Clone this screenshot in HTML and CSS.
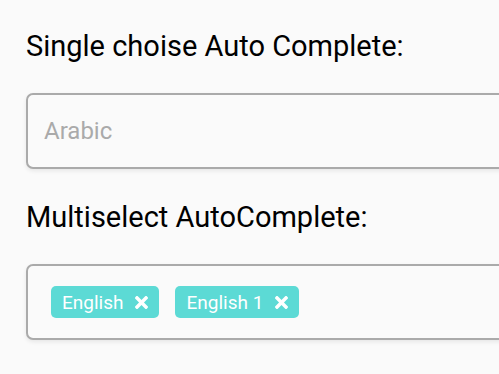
FILE: index.html
```html
<!DOCTYPE html>
<html lang="en">
<head>
  <meta charset="UTF-8">
  <meta name="viewport" content="width=device-width, initial-scale=1.0">
  <title>AutoComplete</title>
  <link rel="stylesheet" href="styles.css">
</head>
<body>
  <div class="page">
    <!-- single choice -->
    <div class="block">
      <h2 class="label">Single choise Auto Complete:</h2>
      <div class="field">
        <input type="text" class="field-input" placeholder="Arabic">
      </div>
    </div>

    <!-- multi select -->
    <div class="block">
      <h2 class="label">Multiselect AutoComplete:</h2>
      <div class="field field-multi">
        <span class="chip">English
          <svg class="chip-x" viewBox="0 80 352 352"><path d="M242.7 256l100.1-100.1c12.3-12.3 12.3-32.2 0-44.5l-22.2-22.2c-12.3-12.3-32.2-12.3-44.5 0L176 189.3 75.9 89.2c-12.3-12.3-32.2-12.3-44.5 0L9.2 111.4c-12.3 12.3-12.3 32.2 0 44.5L109.3 256 9.2 356.1c-12.3 12.3-12.3 32.2 0 44.5l22.2 22.2c12.3 12.3 32.2 12.3 44.5 0L176 322.7l100.1 100.1c12.3 12.3 32.2 12.3 44.5 0l22.2-22.2c12.3-12.3 12.3-32.2 0-44.5L242.7 256z"/></svg>
        </span>
        <span class="chip">English 1
          <svg class="chip-x" viewBox="0 80 352 352"><path d="M242.7 256l100.1-100.1c12.3-12.3 12.3-32.2 0-44.5l-22.2-22.2c-12.3-12.3-32.2-12.3-44.5 0L176 189.3 75.9 89.2c-12.3-12.3-32.2-12.3-44.5 0L9.2 111.4c-12.3 12.3-12.3 32.2 0 44.5L109.3 256 9.2 356.1c-12.3 12.3-12.3 32.2 0 44.5l22.2 22.2c12.3 12.3 32.2 12.3 44.5 0L176 322.7l100.1 100.1c12.3 12.3 32.2 12.3 44.5 0l22.2-22.2c12.3-12.3 12.3-32.2 0-44.5L242.7 256z"/></svg>
        </span>
      </div>
    </div>
  </div>
</body>
</html>
```

FILE: styles.css
```css
/* base */
body {
  margin: 0;
  background-color: #fafafa;
  font-family: Roboto, "Liberation Sans", sans-serif;
  color: #000;
  overflow: hidden;
}
.page {
  padding: 28px 0 0 26px;
}
.block {
  margin-bottom: 30px;
}
.label {
  font-size: 29px;
  font-weight: 400;
  line-height: 36px;
  margin: 0 0 29px;
}
.field {
  width: 540px;
  height: 76px;
  box-sizing: border-box;
  border: 2px solid #aaa;
  border-radius: 7px;
  background-color: #fafafa;
  box-shadow: 0 2px 4px rgba(0, 0, 0, 0.08);
  display: flex;
  align-items: center;
}
.field-input {
  border: none;
  outline: none;
  background: transparent;
  font-family: inherit;
  font-size: 24px;
  padding: 0 16px;
  width: 100%;
}
.field-input::placeholder {
  color: #aaa;
}

/* chips */
.field-multi {
  padding-left: 23px;
  gap: 16px;
}
.chip {
  display: inline-flex;
  align-items: center;
  gap: 12px;
  height: 32px;
  padding: 0 11px;
  border-radius: 5px;
  background-color: #5cdad5;
  color: #fff;
  font-size: 19px;
}
.chip-x {
  width: 13px;
  height: 13px;
  fill: #fff;
}
```
